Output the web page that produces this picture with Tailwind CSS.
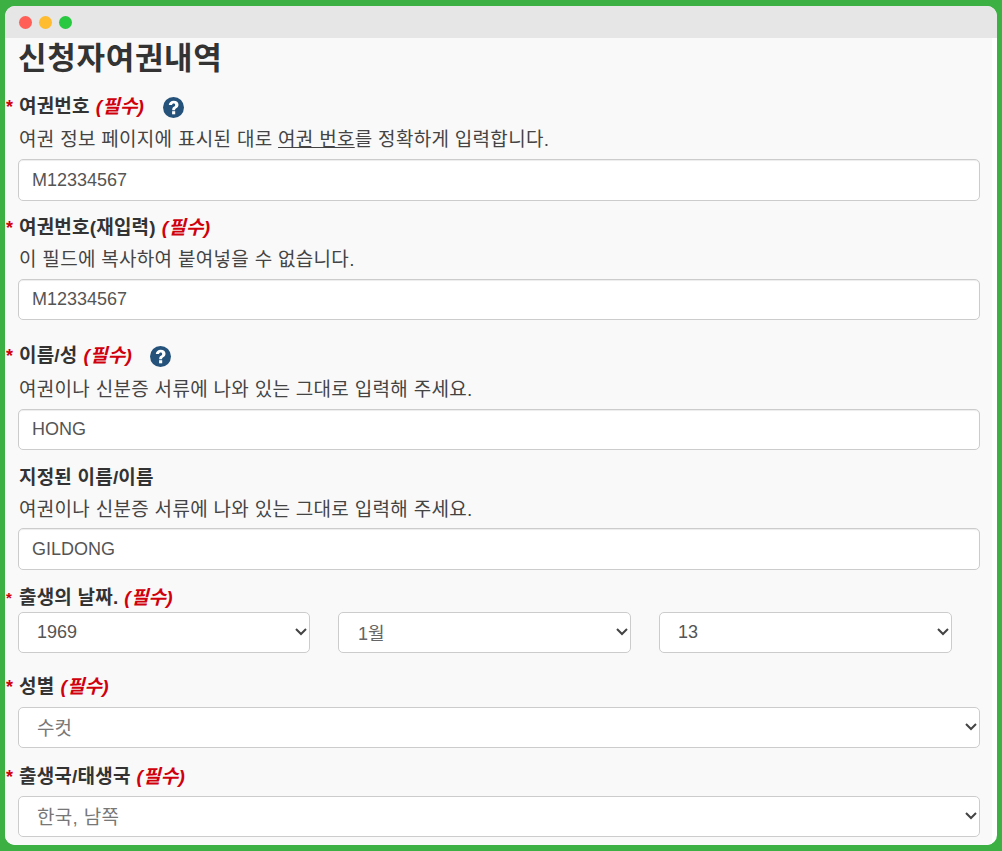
<!DOCTYPE html>
<html lang="ko">
<head>
<meta charset="utf-8">
<script src="https://cdn.jsdelivr.net/npm/@tailwindcss/browser@4"></script>
</head>
<body class="bg-[#3cb043] h-[851px] overflow-hidden font-['Liberation_Sans','Noto_Sans_CJK_KR',sans-serif] text-[18px] text-[#333]">
<div class="mx-[5px] mt-[6px] h-[839px] bg-white rounded-[10px] overflow-hidden">
  <div class="h-[32px] bg-[#e6e6e6] flex items-center gap-[7px] pl-[14px]">
    <span class="size-[13px] rounded-full bg-[#ff5f57]"></span>
    <span class="size-[13px] rounded-full bg-[#febc2e]"></span>
    <span class="size-[13px] rounded-full bg-[#28c840]"></span>
  </div>
  <div class="w-[987px] h-[807px] bg-[#f9f9f9] pl-[13px] pr-[12px]">
    <h1 class="text-[31px] tracking-[0.7px] font-bold h-[40px] pt-[1px] leading-[40px]">신청자여권내역</h1>

    <div class="mt-[15px] h-[28px] flex items-center text-[19px] tracking-[0.2px] font-bold leading-[28px]">
      <span class="relative flex items-center pl-[1px]"><span class="absolute -left-[12px] text-[#d0000d] text-[18px]">*</span>여권번호<em class="text-[#d0000d] ml-[6px]">(필수)</em></span>
      <svg class="ml-[19px] size-[21px]" viewBox="0 0 21 21"><circle cx="10.500" cy="10.500" r="10.500" fill="#24527a"/><path d="M5.800 8.100C6 5.300 8 3.700 10.700 3.700c2.800 0 4.800 1.600 4.800 4 0 1.900-1.100 2.800-2.300 3.600-.9.600-1.100 1-1.100 1.900H9.200c0-1.800.4-2.600 1.600-3.400 1-.7 1.400-1.100 1.400-1.900 0-.9-.6-1.500-1.500-1.500-1 0-1.600.7-1.700 1.700z" fill="#fff"/><rect x="9.100" y="14.200" width="3.100" height="3.100" fill="#fff"/></svg>
    </div>
    <p class="h-[28px] text-[19px] tracking-[0.3px] text-[#444] leading-[28px] pl-[1px] mt-[5px]">여권 정보 페이지에 표시된 대로 <u>여권 번호</u>를 정확하게 입력합니다.</p>
    <input value="M12334567" class="mt-[5px] block w-[962px] h-[42px] px-[13px] bg-white border border-[#ccc] rounded-[5px] text-[#555] shadow-[inset_0_1px_1px_rgba(0,0,0,0.075)]">

    <div class="mt-[13px] h-[28px] flex items-center text-[19px] tracking-[0.2px] font-bold leading-[28px]">
      <span class="relative flex items-center pl-[1px]"><span class="absolute -left-[12px] text-[#d0000d] text-[18px]">*</span>여권번호(재입력)<em class="text-[#d0000d] ml-[6px]">(필수)</em></span>
    </div>
    <p class="h-[28px] text-[19px] tracking-[0.3px] text-[#444] leading-[28px] pl-[1px] mt-[4px]">이 필드에 복사하여 붙여넣을 수 없습니다.</p>
    <input value="M12334567" class="mt-[5px] block w-[962px] h-[41px] px-[13px] bg-white border border-[#ccc] rounded-[5px] text-[#555] shadow-[inset_0_1px_1px_rgba(0,0,0,0.075)]">

    <div class="mt-[22px] h-[28px] flex items-center text-[19px] tracking-[0.2px] font-bold leading-[28px]">
      <span class="relative flex items-center pl-[1px]"><span class="absolute -left-[12px] text-[#d0000d] text-[18px]">*</span>이름/성<em class="text-[#d0000d] ml-[6px]">(필수)</em></span>
      <svg class="ml-[18px] size-[21px]" viewBox="0 0 21 21"><circle cx="10.500" cy="10.500" r="10.500" fill="#24527a"/><path d="M5.800 8.100C6 5.300 8 3.700 10.700 3.700c2.800 0 4.800 1.600 4.800 4 0 1.900-1.100 2.800-2.300 3.600-.9.600-1.100 1-1.100 1.900H9.200c0-1.800.4-2.600 1.600-3.400 1-.7 1.400-1.100 1.400-1.900 0-.9-.6-1.500-1.500-1.500-1 0-1.600.7-1.700 1.700z" fill="#fff"/><rect x="9.100" y="14.200" width="3.100" height="3.100" fill="#fff"/></svg>
    </div>
    <p class="h-[28px] text-[19px] tracking-[0.3px] text-[#444] leading-[28px] pl-[1px] mt-[6px]">여권이나 신분증 서류에 나와 있는 그대로 입력해 주세요.</p>
    <input value="HONG" class="mt-[5px] block w-[962px] h-[41px] px-[13px] bg-white border border-[#ccc] rounded-[5px] text-[#555] shadow-[inset_0_1px_1px_rgba(0,0,0,0.075)]">

    <div class="mt-[14px] h-[28px] flex items-center text-[19px] tracking-[0.2px] font-bold leading-[28px] pl-[1px]">지정된 이름/이름</div>
    <p class="h-[28px] text-[19px] tracking-[0.3px] text-[#444] leading-[28px] pl-[1px] mt-[4px]">여권이나 신분증 서류에 나와 있는 그대로 입력해 주세요.</p>
    <input value="GILDONG" class="mt-[4px] block w-[962px] h-[42px] px-[13px] bg-white border border-[#ccc] rounded-[5px] text-[#555] shadow-[inset_0_1px_1px_rgba(0,0,0,0.075)]">

    <div class="mt-[14px] h-[28px] flex items-center text-[19px] tracking-[0.2px] font-bold leading-[28px]">
      <span class="relative flex items-center pl-[1px]"><span class="absolute -left-[12px] text-[#d0000d] text-[15px]">*</span>출생의 날짜.<em class="text-[#d0000d] ml-[6px]">(필수)</em></span>
    </div>
    <div class="flex gap-[28px]">
      <div class="relative w-[292px]">
        <select class="appearance-none block w-full h-[41px] pl-[18px] bg-white border border-[#ccc] rounded-[5px] text-[#555]"><option>1969</option></select>
        <svg class="absolute right-[3px] top-[16px] w-[12px] h-[8px] pointer-events-none" viewBox="0 0 12 8" fill="none" stroke="#444" stroke-width="2"><path d="M1 1l5 5 5-5"/></svg>
      </div>
      <div class="relative w-[293px]">
        <select class="appearance-none block w-full h-[41px] pl-[19px] pt-[3px] bg-white border border-[#ccc] rounded-[5px] text-[#666]"><option>1월</option></select>
        <svg class="absolute right-[3px] top-[16px] w-[12px] h-[8px] pointer-events-none" viewBox="0 0 12 8" fill="none" stroke="#444" stroke-width="2"><path d="M1 1l5 5 5-5"/></svg>
      </div>
      <div class="relative w-[293px]">
        <select class="appearance-none block w-full h-[41px] pl-[18px] bg-white border border-[#ccc] rounded-[5px] text-[#555]"><option>13</option></select>
        <svg class="absolute right-[3px] top-[16px] w-[12px] h-[8px] pointer-events-none" viewBox="0 0 12 8" fill="none" stroke="#444" stroke-width="2"><path d="M1 1l5 5 5-5"/></svg>
      </div>
    </div>

    <div class="mt-[20px] h-[28px] flex items-center text-[19px] tracking-[0.2px] font-bold leading-[28px]">
      <span class="relative flex items-center pl-[1px]"><span class="absolute -left-[12px] text-[#d0000d] text-[18px]">*</span>성별<em class="text-[#d0000d] ml-[6px]">(필수)</em></span>
    </div>
    <div class="relative mt-[6px] w-[962px]">
      <select class="appearance-none block w-full h-[41px] pl-[18px] pt-[3px] text-[19px] bg-white border border-[#ccc] rounded-[5px] text-[#777]"><option>수컷</option></select>
      <svg class="absolute right-[3px] top-[16px] w-[12px] h-[8px] pointer-events-none" viewBox="0 0 12 8" fill="none" stroke="#444" stroke-width="2"><path d="M1 1l5 5 5-5"/></svg>
    </div>

    <div class="mt-[15px] h-[28px] flex items-center text-[19px] tracking-[0.2px] font-bold leading-[28px]">
      <span class="relative flex items-center pl-[1px]"><span class="absolute -left-[12px] text-[#d0000d] text-[18px]">*</span>출생국/태생국<em class="text-[#d0000d] ml-[6px]">(필수)</em></span>
    </div>
    <div class="relative mt-[5px] w-[962px]">
      <select class="appearance-none block w-full h-[41px] pl-[18px] pt-[4px] text-[19px] tracking-[0.3px] bg-white border border-[#ccc] rounded-[5px] text-[#777]"><option>한국, 남쪽</option></select>
      <svg class="absolute right-[3px] top-[16px] w-[12px] h-[8px] pointer-events-none" viewBox="0 0 12 8" fill="none" stroke="#444" stroke-width="2"><path d="M1 1l5 5 5-5"/></svg>
    </div>
  </div>
</div>
</body>
</html>
